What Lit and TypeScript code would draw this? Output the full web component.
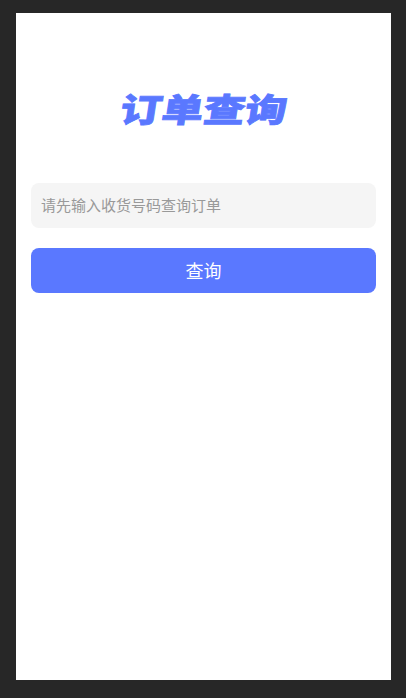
import { LitElement, html, css } from "lit";
import { customElement } from "lit/decorators.js";

@customElement("app-root")
export class AppRoot extends LitElement {
  static styles = css`
    :host {
      display: block;
      box-sizing: border-box;
      width: 406px;
      height: 698px;
      padding: 13px 15px 18px 16px;
      background: #272727;
      font-family: "Noto Sans CJK SC", "Liberation Sans", sans-serif;
    }
    .page {
      box-sizing: border-box;
      height: 100%;
      background: #fff;
      padding: 69px 15px 0;
      display: flex;
      flex-direction: column;
    }
    .title {
      margin: 0;
      height: 56px;
      line-height: 53px;
      text-align: center;
      font-size: 33px;
      font-weight: 900;
      color: #5a78ff;
    }
    .title span {
      display: inline-block;
      transform: scaleX(1.26) skewX(-7deg);
      -webkit-text-stroke: 0.8px #5a78ff;
    }
    .field {
      margin-top: 45px;
      height: 45px;
      box-sizing: border-box;
      width: 100%;
      border: 0;
      outline: 0;
      border-radius: 8px;
      background: #f5f5f5;
      padding: 0 10px 2px;
      font: 15px "Noto Sans CJK SC", "Liberation Sans", sans-serif;
      color: #333;
    }
    .field::placeholder {
      color: #999;
      opacity: 1;
    }
    .btn {
      margin-top: 20px;
      height: 45px;
      border: 0;
      border-radius: 8px;
      background: #5a78ff;
      color: #fff;
      font: 18px "Noto Sans CJK SC", "Liberation Sans", sans-serif;
      padding: 0 0 2px;
    }
  `;

  render() {
    return html`
      <div class="page">
        <h1 class="title"><span>订单查询</span></h1>
        <input class="field" type="text" placeholder="请先输入收货号码查询订单" />
        <button class="btn" type="button">查询</button>
      </div>
    `;
  }
}
